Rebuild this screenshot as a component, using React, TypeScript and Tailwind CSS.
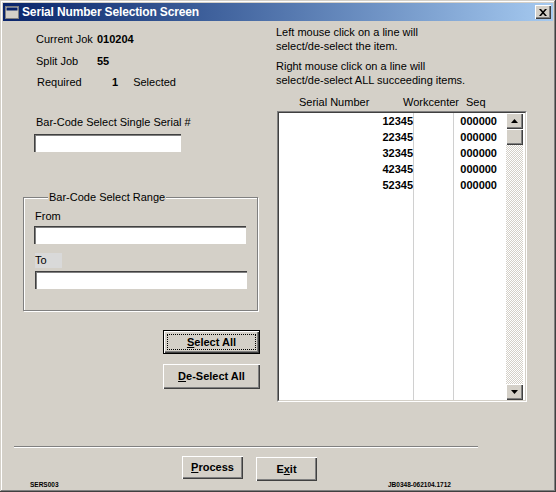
import React from "react";

const raised =
  "bg-[#d4d0c8] shadow-[inset_1px_1px_0_#ffffff,inset_-1px_-1px_0_#404040,inset_-2px_-2px_0_#808080]";

function Field({ className }: { className: string }) {
  return (
    <div
      className={
        "bg-white border-t border-l border-[#404040] shadow-[inset_1px_1px_0_#808080] " +
        className
      }
    />
  );
}

function Btn({
  children,
  def,
  className,
}: {
  children: React.ReactNode;
  def?: boolean;
  className: string;
}) {
  if (def) {
    return (
      <div className={"border border-black p-0 " + className}>
        <div className={"w-full h-full flex items-center justify-center p-[3px] " + raised}>
          <div className="w-full h-full border border-dotted border-black flex items-center justify-center text-[11px] font-bold">
            {children}
          </div>
        </div>
      </div>
    );
  }
  return (
    <div className={"flex items-center justify-center text-[11px] font-bold " + raised + " " + className}>
      {children}
    </div>
  );
}

const rows = ["12345", "22345", "32345", "42345", "52345"];

export default function App() {
  return (
    <div className="w-[556px] h-[492px] bg-[#d4d0c8] p-[3px] flex flex-col text-black font-['Liberation_Sans',Arial,sans-serif] shadow-[inset_-1px_-1px_0_#404040,inset_1px_1px_0_#d4d0c8,inset_-2px_-2px_0_#808080,inset_2px_2px_0_#ffffff]">
      {/* title bar */}
      <div className="h-[18px] flex items-center bg-linear-to-r from-[#0a246a] to-[#a6caf0]">
        <svg width="14" height="13" viewBox="0 0 14 13" className="ml-[2px]">
          <rect x="0.5" y="0.5" width="13" height="12" fill="#d4d0c8" stroke="#ffffff" />
          <rect x="1" y="1" width="12" height="11" fill="#d4d0c8" stroke="#404040" strokeWidth="0" />
          <rect x="1.5" y="1.5" width="11" height="3" fill="#0a246a" />
          <rect x="0.5" y="0.5" width="13" height="12" fill="none" stroke="#808080" />
        </svg>
        <span className="ml-[3px] text-white font-bold text-[12px] leading-none tracking-[-0.15px]">
          Serial Number Selection Screen
        </span>
        <div className={"ml-auto mr-[2px] w-[16px] h-[14px] flex items-center justify-center " + raised}>
          <svg width="8" height="7" viewBox="0 0 8 7">
            <path d="M0 0h2l2 2.2L6 0h2L5 3.5 8 7H6L4 4.8 2 7H0l3-3.5z" fill="#000" />
          </svg>
        </div>
      </div>

      {/* body */}
      <div className="flex pt-[4px] pl-[20px] text-[11px]">
        {/* left column */}
        <div className="w-[240px] flex flex-col">
          <div className="mt-[3px] pl-[13px] h-[22px] flex items-center">
            <span className="w-[61px]">Current Jok</span>
            <span className="font-bold">010204</span>
          </div>
          <div className="pl-[13px] h-[22px] flex items-center">
            <span className="w-[61px]">Split Job</span>
            <span className="font-bold">55</span>
          </div>
          <div className="pl-[14px] h-[21px] flex items-center">
            <span className="w-[75px]">Required</span>
            <span className="font-bold">1</span>
            <span className="ml-[15px]">Selected</span>
          </div>
          <div className="mt-[22px] pl-[13px] leading-[14px]">Bar-Code Select Single Serial #</div>
          <Field className="mt-[5px] ml-[11px] w-[147px] h-[18px]" />

          {/* group box */}
          <div className="relative mt-[45px] w-[235px] h-[114px] border border-[#808080] shadow-[inset_1px_1px_0_#ffffff,1px_1px_0_#ffffff] flex flex-col">
            <span className="absolute left-[24px] top-[-8px] px-[1px] bg-[#d4d0c8] leading-[14px]">
              Bar-Code Select Range
            </span>
            <div className="mt-[11px] ml-[11px] leading-[14px]">From</div>
            <Field className="mt-[3px] ml-[10px] w-[212px] h-[18px]" />
            <div className="mt-[9px] ml-[11px] w-[27px] h-[15px] bg-[#d9d9d9] leading-[15px]">To</div>
            <Field className="mt-[3px] ml-[11px] w-[212px] h-[18px]" />
          </div>

          <Btn def className="mt-[19px] ml-[140px] w-[97px] h-[24px]">
            <span>
              <span className="underline">S</span>elect All
            </span>
          </Btn>
          <Btn className="mt-[10px] ml-[140px] w-[97px] h-[25px]">
            <span>
              <span className="underline">D</span>e-Select All
            </span>
          </Btn>
        </div>

        {/* right column */}
        <div className="ml-[13px] w-[251px] flex flex-col">
          <div className="leading-[14px]">Left mouse click on a line will</div>
          <div className="leading-[14px]">select/de-select the item.</div>
          <div className="mt-[6px] leading-[14px]">Right mouse click on a line will</div>
          <div className="leading-[14px]">select/de-select ALL succeeding items.</div>
          <div className="mt-[8px] leading-[14px] flex pl-[23px]">
            <span className="w-[104px]">Serial Number</span>
            <span className="w-[63px]">Workcenter</span>
            <span>Seq</span>
          </div>

          {/* list box */}
          <div className="mt-[2px] ml-[1px] w-[250px] h-[291px] border-t border-l border-[#808080] border-b border-r border-b-white border-r-white">
            <div className="w-full h-full flex border-t border-l border-[#404040] border-b border-r border-b-[#d4d0c8] border-r-[#d4d0c8] bg-white">
              <div className="w-[135px] border-r border-[#d0d0d0] flex flex-col items-end font-bold">
                {rows.map((r) => (
                  <div key={r} className="leading-[16px] h-[16px]">
                    {r}
                  </div>
                ))}
              </div>
              <div className="w-[40px] border-r border-[#d0d0d0]" />
              <div className="w-[52px] flex flex-col items-end pr-[9px] font-bold">
                {rows.map((r) => (
                  <div key={r} className="leading-[16px] h-[16px]">
                    000000
                  </div>
                ))}
              </div>
              <div className="w-[17px] flex flex-col">
                <div className={"h-[16px] flex items-center justify-center " + raised}>
                  <svg width="7" height="4" viewBox="0 0 7 4">
                    <path d="M3.5 0L7 4H0z" fill="#000" />
                  </svg>
                </div>
                <div className={"h-[16px] " + raised} />
                <div className="flex-1 bg-[repeating-conic-gradient(#ffffff_0_25%,#d4d0c8_0_50%)] bg-[length:2px_2px]" />
                <div className={"h-[16px] flex items-center justify-center " + raised}>
                  <svg width="7" height="4" viewBox="0 0 7 4">
                    <path d="M0 0h7L3.5 4z" fill="#000" />
                  </svg>
                </div>
              </div>
            </div>
          </div>
        </div>
      </div>

      {/* separator */}
      <div className="mt-[44px] ml-[11px] w-[464px] h-[2px] border-t border-[#808080] border-b border-b-white" />

      {/* bottom buttons */}
      <div className="mt-[8px] flex items-start">
        <Btn className="ml-[179px] w-[61px] h-[23px]">
          <span>
            <span className="underline">P</span>rocess
          </span>
        </Btn>
        <Btn className="ml-[13px] mt-[1px] w-[61px] h-[24px]">
          <span>
            E<span className="underline">x</span>it
          </span>
        </Btn>
      </div>

      {/* footer */}
      <div className="flex text-[6.5px] font-bold leading-[8px] mt-[0px]">
        <span className="w-[385px] pl-[27px]">SERS003</span>
        <span>JB0348-062104.1712</span>
      </div>
    </div>
  );
}
